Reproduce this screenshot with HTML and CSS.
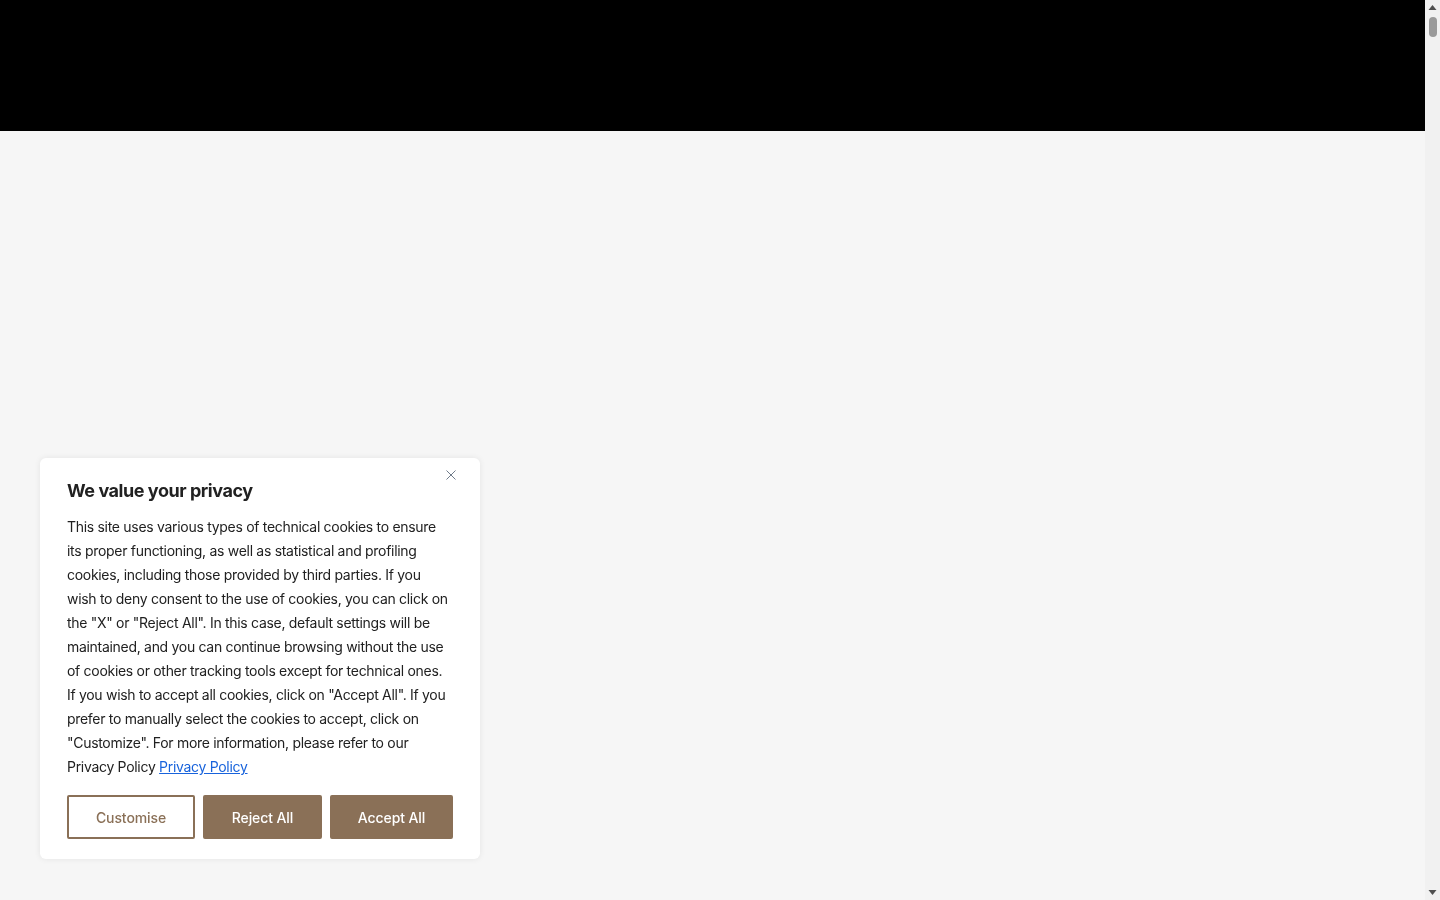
FILE: index.html
```html
<!DOCTYPE html>
<html lang="en">
<head>
<meta charset="utf-8">
<title>We value your privacy</title>
<link rel="stylesheet" href="styles.css">
</head>
<body>
<header class="site-header"></header>
<main class="page-content"></main>
<div class="cookie-banner" role="dialog" aria-label="We value your privacy">
  <button class="cookie-close" aria-label="Close">
    <svg width="10" height="10" viewBox="0 0 10 10"><path d="M0.5 0.5 L9.5 9.5 M9.5 0.5 L0.5 9.5" stroke="#6f7b8a" stroke-width="1" fill="none"/></svg>
  </button>
  <p class="cookie-title">We value your privacy</p>
  <p class="cookie-text">This site uses various types of technical cookies to ensure its proper functioning, as well as statistical and profiling cookies, including those provided by third parties. If you wish to deny consent to the use of cookies, you can click on the "X" or "Reject All". In this case, default settings will be maintained, and you can continue browsing without the use of cookies or other tracking tools except for technical ones. If you wish to accept all cookies, click on "Accept All". If you prefer to manually select the cookies to accept, click on "Customize". For more information, please refer to our Privacy Policy <a href="#" class="cookie-link">Privacy Policy</a></p>
  <div class="cookie-actions">
    <button class="btn btn-outline">Customise</button>
    <button class="btn btn-fill btn-reject">Reject All</button>
    <button class="btn btn-fill btn-accept">Accept All</button>
  </div>
</div>
<div class="scrollbar" aria-hidden="true">
  <svg class="scroll-arrow" width="15" height="15" viewBox="0 0 15 15"><path d="M3.5 10 L7.5 5 L11.5 10 Z" fill="#505050"/></svg>
  <div class="scroll-thumb"></div>
  <div class="scroll-track"></div>
  <svg class="scroll-arrow" width="15" height="15" viewBox="0 0 15 15"><path d="M3.5 5 L7.5 10 L11.5 5 Z" fill="#505050"/></svg>
</div>
</body>
</html>
```
FILE: styles.css
```css
html, body {
  margin: 0;
  padding: 0;
}
body {
  background: #f6f6f6;
  font-family: Inter, "Noto Sans", sans-serif;
}
.site-header {
  height: 131px;
  background: #000;
}
.page-content {
  height: 20000px;
}
.scrollbar {
  position: fixed;
  top: 0;
  right: 0;
  width: 15px;
  height: 100vh;
  background: #f1f1f1;
  display: flex;
  flex-direction: column;
  align-items: center;
}
.scroll-arrow {
  flex: none;
  display: block;
}
.scroll-thumb {
  flex: none;
  width: 8px;
  height: 20px;
  margin-top: 2px;
  border-radius: 4px;
  background: #9a9a9a;
}
.scroll-track {
  flex: 1;
}
.cookie-banner {
  position: fixed;
  left: 40px;
  bottom: 41px;
  width: 440px;
  box-sizing: border-box;
  padding: 21px 27px 20px 27px;
  background: #fff;
  border-radius: 6px;
  box-shadow: 0 0 6px rgba(0,0,0,0.08);
}
.cookie-close {
  position: absolute;
  top: 9px;
  right: 21px;
  width: 16px;
  height: 16px;
  padding: 0;
  border: 0;
  background: transparent;
  display: flex;
  align-items: center;
  justify-content: center;
}
.cookie-title {
  margin: 0 0 12px 0;
  font-size: 18px;
  line-height: 24px;
  font-weight: 700;
  color: #212121;
  letter-spacing: -0.45px;
}
.cookie-text {
  margin: 0;
  font-size: 14px;
  line-height: 24px;
  color: #212121;
  letter-spacing: -0.3px;
}
.cookie-link {
  color: #1863dc;
  text-decoration: underline;
}
.cookie-actions {
  display: flex;
  gap: 8px;
  margin-top: 16px;
}
.btn {
  height: 44px;
  box-sizing: border-box;
  font-family: inherit;
  font-size: 14px;
  font-weight: 500;
  border-radius: 2px;
  border: 2px solid #8a7057;
  padding: 0;
  white-space: nowrap;
  letter-spacing: -0.1px;
}
.btn-outline {
  background: #fff;
  color: #8a7057;
  width: 128px;
}
.btn-fill {
  background: #8a7057;
  color: #fff;
}
.btn-reject { width: 119px; }
.btn-accept { width: 123px; }
```
